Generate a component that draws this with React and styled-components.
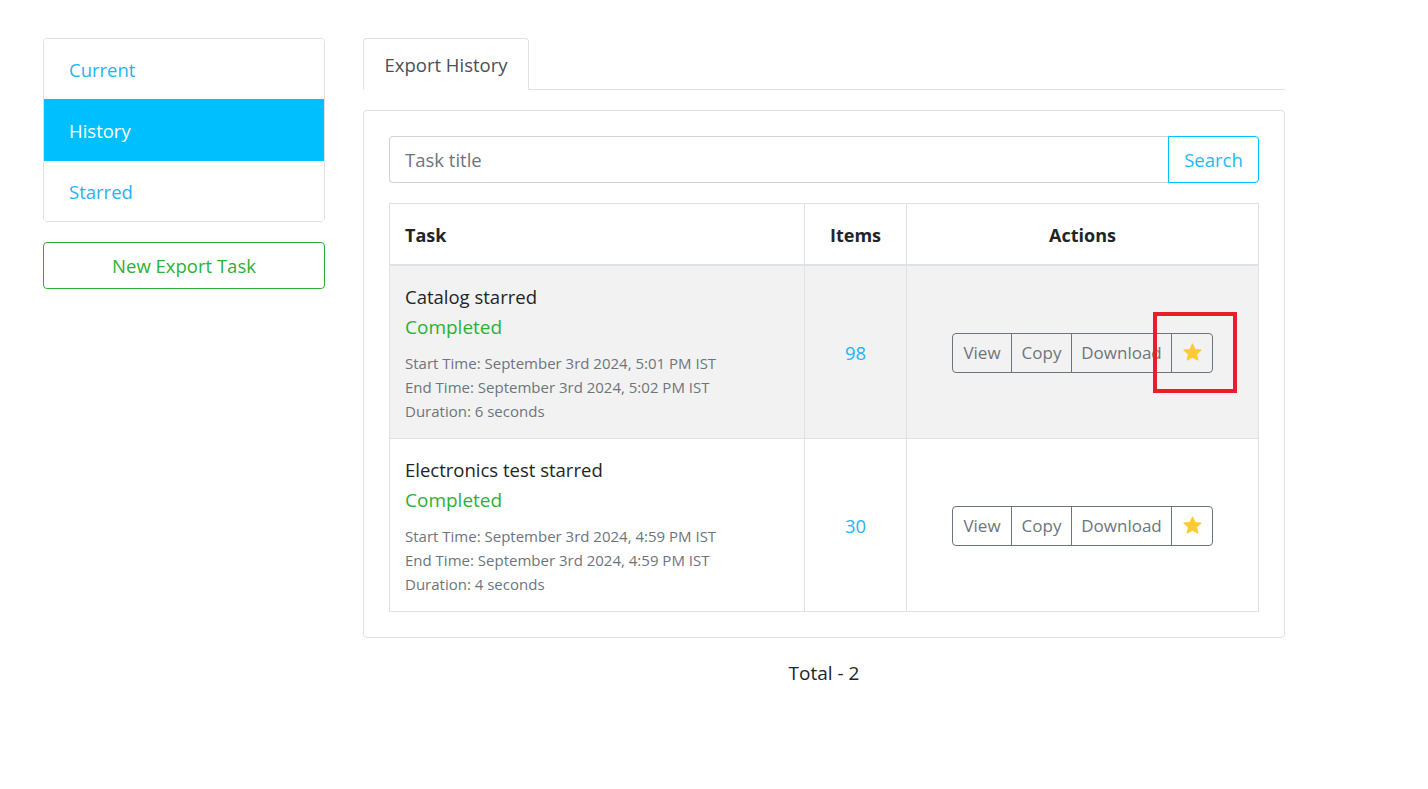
import React from "react";
import styled, { createGlobalStyle } from "styled-components";

const GlobalStyle = createGlobalStyle`
  * { box-sizing: border-box; }
  body {
    margin: 0;
    background: #fff;
    font-family: "Open Sans", "Noto Sans", sans-serif;
    color: #212529;
  }
`;

const FONT = 18.5;

const Page = styled.div`
  display: flex;
  align-items: flex-start;
  gap: 38px;
  padding: 38px 0 0 43px;
`;

const Sidebar = styled.aside`
  width: 282px;
  display: flex;
  flex-direction: column;
  gap: 20px;
`;

const NavList = styled.div`
  border: 1px solid #dee2e6;
  border-radius: 4px;
  overflow: hidden;
`;

const NavItem = styled.div`
  height: ${(p) => p.$h}px;
  display: flex;
  align-items: center;
  padding: 0 25px;
  font-size: ${FONT}px;
  color: ${(p) => (p.$active ? "#fff" : "#27b2f3")};
  background: ${(p) => (p.$active ? "#00bfff" : "#fff")};
`;

const OutlineGreen = styled.button`
  height: 47px;
  width: 100%;
  border: 1px solid #2cb135;
  border-radius: 4px;
  background: #fff;
  color: #2cb135;
  font-family: inherit;
  font-size: ${FONT}px;
`;

const Main = styled.main`
  width: 922px;
  display: flex;
  flex-direction: column;
`;

const TabBar = styled.div`
  display: flex;
  border-bottom: 1px solid #dee2e6;
`;

const Tab = styled.div`
  height: 52px;
  margin-bottom: -1px;
  padding: 0 20px 0 20.5px;
  display: flex;
  align-items: center;
  border: 1px solid #dee2e6;
  border-bottom-color: #fff;
  border-radius: 4px 4px 0 0;
  font-size: ${FONT}px;
  color: #495057;
  background: #fff;
`;

const Card = styled.section`
  margin-top: 20px;
  border: 1px solid #dee2e6;
  border-radius: 4px;
  padding: 25px;
`;

const SearchRow = styled.div`
  display: flex;
  height: 47px;
`;

const SearchInput = styled.input`
  flex: 1;
  min-width: 0;
  border: 1px solid #ced4da;
  border-right: none;
  border-radius: 4px 0 0 4px;
  padding: 0 15px;
  font-family: inherit;
  font-size: ${FONT}px;
  color: #495057;
  outline: none;
  &::placeholder { color: #6c757d; }
`;

const SearchButton = styled.button`
  width: 91px;
  border: 1px solid #00bfff;
  border-radius: 0 4px 4px 0;
  background: #fff;
  color: #1fb8f6;
  font-family: inherit;
  font-size: ${FONT}px;
`;

const Table = styled.table`
  margin-top: 20px;
  width: 100%;
  border-collapse: collapse;
  table-layout: fixed;
`;

const Th = styled.th`
  height: 61px;
  padding: 2px 15px 0;
  border: 1px solid #dee2e6;
  border-bottom: 2px solid #dee2e6;
  font-size: 18px;
  font-weight: 700;
  color: #212529;
  text-align: ${(p) => p.$align || "left"};
`;

const Row = styled.tr`
  background: ${(p) => (p.$striped ? "#f2f2f2" : "#fff")};
`;

const Td = styled.td`
  border: 1px solid #dee2e6;
  padding: 17px 15px 15px;
  vertical-align: middle;
  text-align: ${(p) => p.$align || "left"};
`;

const Title = styled.div`
  font-size: ${FONT}px;
  line-height: 27px;
  color: #212529;
`;

const Status = styled.div`
  font-size: 19px;
  line-height: 34px;
  color: #2cb135;
`;

const Meta = styled.div`
  margin-top: 7px;
  font-size: 15px;
  line-height: 24px;
  color: #6c757d;
`;

const Count = styled.span`
  font-size: ${FONT}px;
  color: #27b2f3;
`;

const ButtonGroup = styled.div`
  position: relative;
  display: inline-flex;
  vertical-align: middle;
  height: 40px;
  border: 1px solid #6c757d;
  border-radius: 4px;
`;

const GroupButton = styled.button`
  display: flex;
  align-items: center;
  justify-content: center;
  width: ${(p) => p.$w}px;
  height: 100%;
  padding: 0;
  border: none;
  border-left: ${(p) => (p.$first ? "none" : "1px solid #6c757d")};
  background: transparent;
  color: #6c757d;
  font-family: inherit;
  font-size: 17px;
`;

const Highlight = styled.div`
  position: absolute;
  left: 200px;
  top: -22px;
  width: 84px;
  height: 81px;
  border: 4px solid #e81f2a;
  pointer-events: none;
`;

const Total = styled.div`
  margin-top: 22px;
  text-align: center;
  font-size: 19px;
  line-height: 27px;
  color: #212529;
`;

const Star = () => (
  <svg width="21" height="21" viewBox="0 0 24 24">
    <path
      d="M12 2.2l2.9 6.3 6.9.7-5.2 4.6 1.5 6.8L12 17.1l-6.1 3.5 1.5-6.8L2.2 9.2l6.9-.7z"
      fill="#fdcb2e"
      stroke="#fdcb2e"
      strokeWidth="1.2"
      strokeLinejoin="round"
    />
  </svg>
);

const tasks = [
  {
    title: "Catalog starred",
    items: 98,
    start: "September 3rd 2024, 5:01 PM IST",
    end: "September 3rd 2024, 5:02 PM IST",
    duration: "6 seconds",
    highlight: true,
  },
  {
    title: "Electronics test starred",
    items: 30,
    start: "September 3rd 2024, 4:59 PM IST",
    end: "September 3rd 2024, 4:59 PM IST",
    duration: "4 seconds",
  },
];

export default function App() {
  return (
    <>
      <GlobalStyle />
      <Page>
        <Sidebar>
          <NavList>
            <NavItem $h={60}>Current</NavItem>
            <NavItem $h={62} $active>History</NavItem>
            <NavItem $h={60}>Starred</NavItem>
          </NavList>
          <OutlineGreen>New Export Task</OutlineGreen>
        </Sidebar>
        <Main>
          <TabBar>
            <Tab>Export History</Tab>
          </TabBar>
          <Card>
            <SearchRow>
              <SearchInput placeholder="Task title" />
              <SearchButton>Search</SearchButton>
            </SearchRow>
            <Table>
              <colgroup>
                <col style={{ width: 415 }} />
                <col style={{ width: 102 }} />
                <col />
              </colgroup>
              <thead>
                <tr>
                  <Th>Task</Th>
                  <Th $align="center">Items</Th>
                  <Th $align="center">Actions</Th>
                </tr>
              </thead>
              <tbody>
                {tasks.map((t, i) => (
                  <Row key={t.title} $striped={i % 2 === 0}>
                    <Td>
                      <Title>{t.title}</Title>
                      <Status>Completed</Status>
                      <Meta>
                        <div>Start Time: {t.start}</div>
                        <div>End Time: {t.end}</div>
                        <div>Duration: {t.duration}</div>
                      </Meta>
                    </Td>
                    <Td $align="center">
                      <Count>{t.items}</Count>
                    </Td>
                    <Td $align="center">
                      <ButtonGroup>
                        <GroupButton $first $w={58}>View</GroupButton>
                        <GroupButton $w={60}>Copy</GroupButton>
                        <GroupButton $w={100}>Download</GroupButton>
                        <GroupButton $w={41}>
                          <Star />
                        </GroupButton>
                        {t.highlight && <Highlight />}
                      </ButtonGroup>
                    </Td>
                  </Row>
                ))}
              </tbody>
            </Table>
          </Card>
          <Total>Total - 2</Total>
        </Main>
      </Page>
    </>
  );
}
